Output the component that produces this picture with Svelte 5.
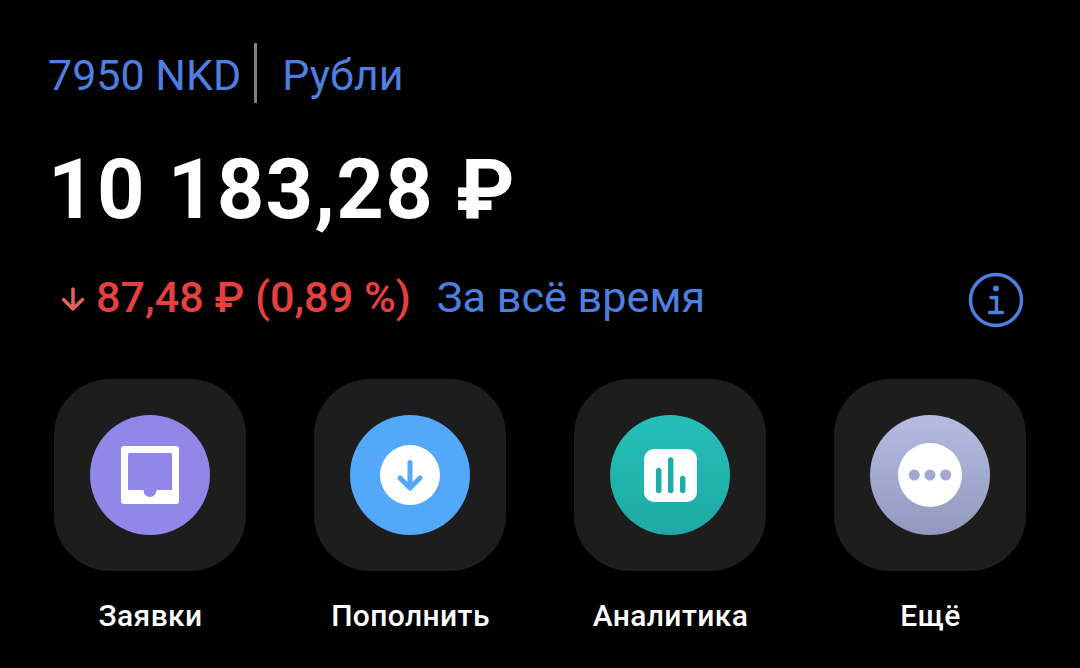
<script>
  const actions = [
    { label: "Заявки", kind: "orders" },
    { label: "Пополнить", kind: "topup" },
    { label: "Аналитика", kind: "stats" },
    { label: "Ещё", kind: "more" }
  ];
</script>

<main>
  <div class="account">
    <span>7950 NKD</span>
    <i class="divider"></i>
    <span>Рубли</span>
  </div>

  <div class="balance">10 183,28 ₽</div>

  <div class="change">
    <svg class="down" width="26" height="26" viewBox="0 0 26 26" fill="none" stroke="#e0605f" stroke-width="3.500" stroke-linecap="round" stroke-linejoin="round">
      <path d="M13 3v19M3.500 13.500 13 23l9.500-9.500" />
    </svg>
    <span class="delta">87,48 ₽ (0,89 %)</span>
    <span class="period">За всё время</span>
    <svg class="info" width="56" height="56" viewBox="0 0 56 56" fill="none" stroke="#4d7fe0" stroke-width="3.500" stroke-linecap="round">
      <circle cx="28" cy="28" r="25.500" />
      <circle cx="28" cy="16.500" r="3" fill="#4d7fe0" stroke="none" />
      <path d="M23 25.500h5.500v15M21.500 40.500h13" />
    </svg>
  </div>

  <div class="actions">
    {#each actions as a}
      <div class="action">
        <div class="tile">
          <div class="circle {a.kind}">
            {#if a.kind === "orders"}
              <svg width="60" height="60" viewBox="0 0 60 60">
                <path fill="#fff" fill-rule="evenodd" d="M4 1h52a3 3 0 0 1 3 3v52a3 3 0 0 1-3 3H4a3 3 0 0 1-3-3V4a3 3 0 0 1 3-3ZM9.500 8a1.500 1.500 0 0 0-1.500 1.500V45h15.500a6.500 7 0 0 0 13 0H52V9.500A1.500 1.500 0 0 0 50.500 8h-41Z" />
              </svg>
            {:else if a.kind === "topup"}
              <svg width="60" height="60" viewBox="0 0 60 60">
                <circle cx="30" cy="30" r="30" fill="#fff" />
                <path d="M30 17.500v25.500M20 33l10 10 10-10" fill="none" stroke="#54a8fb" stroke-width="5" stroke-linecap="round" stroke-linejoin="round" />
              </svg>
            {:else if a.kind === "stats"}
              <svg width="53" height="53" viewBox="0 0 53 53">
                <rect width="53" height="53" rx="10" fill="#fff" />
                <path d="M14.700 21.500v20M26.700 11v30.500M38.700 29.500v12" fill="none" stroke="#20ada8" stroke-width="5.500" stroke-linecap="round" />
              </svg>
            {:else}
              <svg width="64" height="64" viewBox="0 0 64 64">
                <circle cx="32" cy="32" r="32" fill="#fff" />
                <circle cx="16.300" cy="32" r="5.500" fill="#a3a9d0" />
                <circle cx="32" cy="32" r="5.500" fill="#a3a9d0" />
                <circle cx="47.700" cy="32" r="5.500" fill="#a3a9d0" />
              </svg>
            {/if}
          </div>
        </div>
        <div class="label">{a.label}</div>
      </div>
    {/each}
  </div>
</main>

<style>
  :global(body) {
    margin: 0;
    background: #000;
    font-family: Roboto, "Noto Sans", sans-serif;
  }

  main {
    height: 668px;
    box-sizing: border-box;
    padding: 43px 54px 0;
    overflow: hidden;
  }

  .account {
    display: flex;
    align-items: center;
    height: 60px;
    margin-left: -6px;
    font-size: 43px;
    color: #4d7fe0;
  }

  .account span {
    padding-top: 4px;
  }

  .divider {
    width: 3px;
    height: 60px;
    margin: 0 25px 0 13px;
    background: #808080;
  }

  .balance {
    margin-top: 38px;
    margin-left: -6px;
    height: 97px;
    line-height: 97px;
    font-size: 83px;
    font-weight: 700;
    color: #fff;
    letter-spacing: 1.300px;
    white-space: nowrap;
  }

  .change {
    display: flex;
    align-items: center;
    height: 56px;
    margin-top: 31px;
    font-size: 43.200px;
    white-space: nowrap;
  }

  .down {
    margin: 4px 10px 0 6px;
  }

  .delta {
    color: #e53f3f;
    font-weight: 500;
  }

  .period {
    margin-left: 26px;
    color: #4d7fe0;
  }

  .info {
    margin-left: auto;
    margin-right: 2px;
    margin-top: 6px;
  }

  .actions {
    display: flex;
    justify-content: space-between;
    width: 972px;
    margin-top: 54px;
  }

  .action {
    width: 192px;
    display: flex;
    flex-direction: column;
    align-items: center;
  }

  .tile {
    width: 192px;
    height: 192px;
    border-radius: 56px;
    background: #1d1d1d;
    display: flex;
    align-items: center;
    justify-content: center;
  }

  .circle {
    width: 120px;
    height: 120px;
    border-radius: 50%;
    display: flex;
    align-items: center;
    justify-content: center;
  }

  .orders { background: #9087e8; }
  .topup { background: #54a8fb; }
  .stats { background: linear-gradient(180deg, #25bfb7, #1eaaa5); }
  .more { background: linear-gradient(180deg, #b4bce2, #9299bf); }

  .label {
    margin-top: 27px;
    padding-left: 1px;
    font-size: 30px;
    font-weight: 500;
    line-height: 36px;
    letter-spacing: 0.400px;
    color: #fff;
    white-space: nowrap;
  }
</style>
